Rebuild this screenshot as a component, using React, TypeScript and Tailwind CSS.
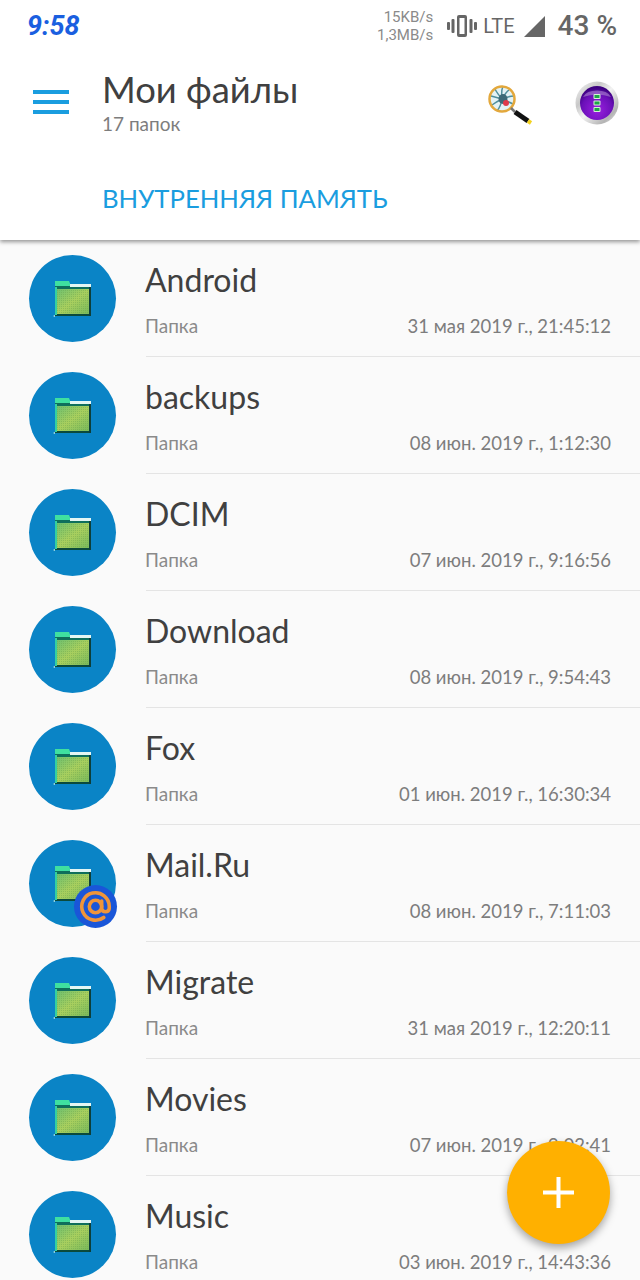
import React from 'react';

const folders = [
  { name: 'Android', date: '31 мая 2019 г., 21:45:12' },
  { name: 'backups', date: '08 июн. 2019 г., 1:12:30' },
  { name: 'DCIM', date: '07 июн. 2019 г., 9:16:56' },
  { name: 'Download', date: '08 июн. 2019 г., 9:54:43' },
  { name: 'Fox', date: '01 июн. 2019 г., 16:30:34' },
  { name: 'Mail.Ru', date: '08 июн. 2019 г., 7:11:03', mail: true },
  { name: 'Migrate', date: '31 мая 2019 г., 12:20:11' },
  { name: 'Movies', date: '07 июн. 2019 г., 9:02:41' },
  { name: 'Music', date: '03 июн. 2019 г., 14:43:36' },
];

function FolderIcon({ id }: { id: string }) {
  return (
    <svg width="40" height="38" viewBox="0 0 40 38">
      <defs>
        <linearGradient id={`b${id}`} x1="0" y1="0" x2="1" y2="1">
          <stop offset="0" stopColor="#6cc070" />
          <stop offset="0.5" stopColor="#a9cf5e" />
          <stop offset="1" stopColor="#78b95c" />
        </linearGradient>
        <pattern id={`h${id}`} width="2" height="2" patternUnits="userSpaceOnUse">
          <rect x="0" y="0" width="1" height="1" fill="#5f9a48" fillOpacity="0.35" />
        </pattern>
      </defs>
      <path d="M2 2h13l3 4h20v30H2z" fill="#0f6f5c" />
      <path d="M2 1h14l2 5H2z" fill="#3fe0a0" />
      <path d="M17 4h21v3H17z" fill="#e4f6f4" />
      <rect x="3" y="9" width="34" height="25" fill={`url(#b${id})`} />
      <rect x="3" y="9" width="34" height="25" fill={`url(#h${id})`} />
      <path d="M2 34h36v2H2z" fill="#0b4a3c" />
      <path d="M2 7h2v28H2z" fill="#35d0a0" />
      <path d="M36 7h2v29h-2z" fill="#0d3f3a" />
      <path d="M0 36l2-1v2z" fill="#bfeee6" />
    </svg>
  );
}

function VibrateIcon() {
  return (
    <svg width="30" height="22" viewBox="0 0 30 22" fill="#666">
      <rect x="0" y="7" width="3" height="8" rx="1" />
      <rect x="4.500" y="4" width="3" height="14" rx="1" />
      <path fillRule="evenodd" d="M10 2q0-2 2-2h6q2 0 2 2v18q0 2-2 2h-6q-2 0-2-2zM12.500 3v16h5V3z" />
      <rect x="22.500" y="4" width="3" height="14" rx="1" />
      <rect x="27" y="7" width="3" height="8" rx="1" />
    </svg>
  );
}

function SpiderIcon() {
  return (
    <svg width="46" height="44" viewBox="0 0 46 44">
      <circle cx="14" cy="18" r="12.500" fill="#e4f2f5" />
      <g stroke="#4f8f9c" strokeWidth="1.500" fill="none">
        <path d="M14 18Q9 12 7 8M14 18Q13 10 15 5M14 18Q18 11 21 9M14 18Q7 16 3 15M14 18Q21 15 26 15M14 18Q8 21 4 24M14 18Q21 21 25 23M14 18Q13 25 9 30" />
      </g>
      <ellipse cx="15" cy="18" rx="4.500" ry="5" fill="#3d6a78" />
      <circle cx="18" cy="22" r="3" fill="#e0394a" />
      <circle cx="14" cy="18" r="12.500" fill="none" stroke="#e3a83c" strokeWidth="2.500" />
      <path d="M23 27l4 4" stroke="#777" strokeWidth="2.500" />
      <path d="M27 31l13 9" stroke="#111" strokeWidth="5" />
      <path d="M40 40l3 2" stroke="#f3d21f" strokeWidth="4" />
    </svg>
  );
}

function MoreIcon() {
  return (
    <svg width="44" height="44" viewBox="0 0 44 44">
      <defs>
        <radialGradient id="purple" cx="0.5" cy="0.7" r="0.65">
          <stop offset="0" stopColor="#9a1fe0" />
          <stop offset="0.7" stopColor="#6a10b8" />
          <stop offset="1" stopColor="#3c0080" />
        </radialGradient>
        <linearGradient id="ring" x1="0" y1="0" x2="1" y2="1">
          <stop offset="0" stopColor="#f8f8f8" />
          <stop offset="0.3" stopColor="#c8c8c8" />
          <stop offset="0.5" stopColor="#f2f2f2" />
          <stop offset="0.8" stopColor="#b4b4b4" />
          <stop offset="1" stopColor="#f4f4f4" />
        </linearGradient>
      </defs>
      <circle cx="22" cy="22" r="21.500" fill="url(#ring)" />
      <circle cx="22" cy="22" r="17" fill="url(#purple)" />
      <path d="M8 16a15 10 0 0 1 28 0q-14-5-28 0z" fill="#b893d8" fillOpacity="0.55" />
      <rect x="18.500" y="13" width="7" height="5" rx="1" fill="#d8f0d8" />
      <rect x="18.500" y="19.500" width="7" height="5" rx="1" fill="#d8f0d8" />
      <rect x="18.500" y="26" width="7" height="5" rx="1" fill="#d8f0d8" />
      <rect x="19.500" y="14" width="5" height="3" fill="#1ea846" />
      <rect x="19.500" y="20.500" width="5" height="3" fill="#1ea846" />
      <rect x="19.500" y="27" width="5" height="3" fill="#1ea846" />
    </svg>
  );
}

export default function App() {
  return (
    <div className="relative h-[1280px] w-[640px] overflow-hidden bg-[#fafafa] font-['Roboto',sans-serif]">
      <header className="relative z-10 h-[240px] bg-white shadow-[0_2px_4px_rgba(0,0,0,0.4)]">
        <div className="flex h-[52px] items-center pl-[27px] pr-[23px]">
          <div className="flex-1 text-[27px] font-bold italic text-[#1a5fe0]">9:58</div>
          <div className="text-right text-[15px] leading-[18px] text-[#8a8a8a]">15KB/s<br />1,3MB/s</div>
          <div className="ml-[14px]"><VibrateIcon /></div>
          <div className="ml-[6px] text-[20px] text-[#666]">LTE</div>
          <svg className="ml-[9px]" width="21" height="21" viewBox="0 0 22 22"><path d="M22 0v22H0z" fill="#666" /></svg>
          <div className="ml-[13px] text-[28px] font-medium text-[#666]">43 %</div>
        </div>
        <div className="flex items-start pt-[17px]">
          <div className="ml-[33px] mt-[21px] flex w-[36px] flex-col gap-[6px]">
            <div className="h-[4px] bg-[#1a9ddf]" />
            <div className="h-[4px] bg-[#1a9ddf]" />
            <div className="h-[4px] bg-[#1a9ddf]" />
          </div>
          <div className="ml-[33px] flex-1 font-['Lato',sans-serif]">
            <div className="text-[36.400px] leading-[40px] text-[#404040]">Мои файлы</div>
            <div className="mt-[3px] text-[19px] leading-[24px] text-[#7d7d7d]">17 папок</div>
          </div>
          <div className="mr-[41px] mt-[12px]"><SpiderIcon /></div>
          <div className="mr-[21px] mt-[12px]"><MoreIcon /></div>
        </div>
        <div className="mt-[46px] pl-[102px] font-['Lato',sans-serif] text-[25.700px] leading-[32px] text-[#1a9ddf]">ВНУТРЕННЯЯ ПАМЯТЬ</div>
      </header>

      <div>
        {folders.map((f, i) => (
          <div key={f.name} className="flex h-[117px] items-center">
            <div className="relative ml-[29px] flex h-[87px] w-[87px] shrink-0 items-center justify-center rounded-full bg-[#0a84c6]">
              <FolderIcon id={String(i)} />
              {f.mail && (
                <div className="absolute -bottom-px -right-px flex h-[43px] w-[43px] items-center justify-center rounded-full bg-[#1a56d8]">
                  <svg width="33" height="33" viewBox="0 0 24 24" fill="none" stroke="#f0953a" strokeWidth="2.600" strokeLinecap="round">
                    <circle cx="12" cy="12" r="4.500" />
                    <path d="M16.500 8v5.500a2.800 2.800 0 0 0 5.500 0V12a10 10 0 1 0-4 8" />
                  </svg>
                </div>
              )}
            </div>
            <div className="ml-[30px] flex h-full flex-1 flex-col border-b border-[#e4e4e4] pr-[29px] font-['Lato',sans-serif]">
              <div className="-ml-px mt-[18px] text-[32px] leading-[44px] text-[#404040]">{f.name}</div>
              <div className="mt-[10px] flex items-center justify-between text-[18.500px] leading-[28px] text-[#7d7d7d]">
                <span className="-ml-px text-[19px] text-[#8a8a8a]">Папка</span>
                <span>{f.date}</span>
              </div>
            </div>
          </div>
        ))}
      </div>

      <div className="absolute left-[507px] top-[1141px] flex h-[103px] w-[103px] items-center justify-center rounded-full bg-[#ffb000] shadow-[0_4px_8px_rgba(0,0,0,0.35)]">
        <svg width="31" height="31" viewBox="0 0 31 31" fill="#fff">
          <rect x="13.500" y="0" width="4" height="31" />
          <rect x="0" y="13.500" width="31" height="4" />
        </svg>
      </div>
    </div>
  );
}
